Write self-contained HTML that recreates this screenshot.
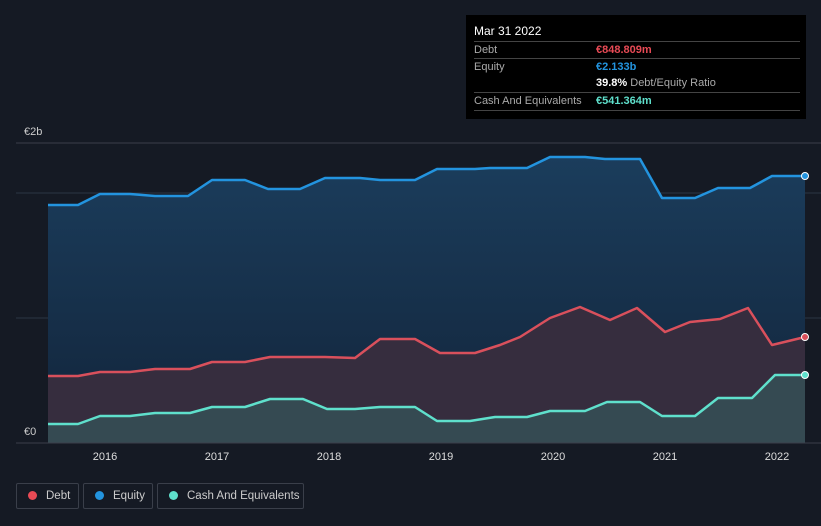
<!DOCTYPE html><html><head><style>
html,body{margin:0;width:821px;height:526px;overflow:hidden}
body{background:#151a24;font-family:"Liberation Sans",sans-serif;position:relative}
.tt{position:absolute;left:466px;top:15px;width:340px;height:104px;background:#000;color:#fff;font-size:11px}
.row{position:absolute;left:8px;width:326px;border-top:1px solid #444;height:17px;line-height:17px;color:#aaa}
.row b{position:absolute;left:122px;font-weight:bold}
.leg{position:absolute;top:483px;height:26px;border:1px solid #3a3f4a;border-radius:2px;color:#ccc;font-size:11.5px;line-height:24px;box-sizing:border-box;white-space:nowrap}
.leg i{display:inline-block;width:9px;height:9px;border-radius:50%;margin:0 9px 0 11px;vertical-align:-1px}
</style></head><body>
<svg width="821" height="526" style="position:absolute;left:0;top:0">
<defs>
<linearGradient id="ge" x1="0" y1="0" x2="0" y2="1"><stop offset="0" stop-color="#1b3d5c"/><stop offset="1" stop-color="#12243a"/></linearGradient>
</defs>
<line x1="16" y1="143" x2="821" y2="143" stroke="#3a3f4a"/>
<line x1="16" y1="193" x2="821" y2="193" stroke="#2a3545"/>
<line x1="16" y1="318" x2="821" y2="318" stroke="#2a3545"/>
<path d="M48,205 L78,205 L100,194 L130,194 L155,196 L188,196 L212,180 L245,180 L268,189 L300,189 L325,178 L360,178 L380,180 L415,180 L437,169 L475,169 L490,168 L527,168 L550,157 L585,157 L605,159 L640,159 L662,198 L695,198 L718,188 L750,188 L772,176 L805,176 L805,443 L48,443Z" fill="url(#ge)"/>
<path d="M48,376 L78,376 L100,372 L130,372 L155,369 L190,369 L212,362 L245,362 L270,357 L325,357 L355,358 L380,339 L415,339 L440,353 L475,353 L500,345 L520,337 L550,318 L580,307 L610,320 L637,308 L665,332 L690,322 L720,319 L748,308 L772,345 L805,337 L805,443 L48,443Z" fill="#362d3e"/>
<path d="M48,424 L78,424 L100,416 L130,416 L155,413 L190,413 L212,407 L245,407 L270,399 L303,399 L327,409 L355,409 L380,407 L415,407 L437,421 L470,421 L495,417 L527,417 L550,411 L585,411 L607,402 L640,402 L662,416 L695,416 L718,398 L752,398 L775,375 L805,375 L805,443 L48,443Z" fill="#354a52"/>
<path d="M48,205 L78,205 L100,194 L130,194 L155,196 L188,196 L212,180 L245,180 L268,189 L300,189 L325,178 L360,178 L380,180 L415,180 L437,169 L475,169 L490,168 L527,168 L550,157 L585,157 L605,159 L640,159 L662,198 L695,198 L718,188 L750,188 L772,176 L805,176" fill="none" stroke="#2394df" stroke-width="2.5" stroke-linejoin="round"/>
<path d="M48,376 L78,376 L100,372 L130,372 L155,369 L190,369 L212,362 L245,362 L270,357 L325,357 L355,358 L380,339 L415,339 L440,353 L475,353 L500,345 L520,337 L550,318 L580,307 L610,320 L637,308 L665,332 L690,322 L720,319 L748,308 L772,345 L805,337" fill="none" stroke="#d9505c" stroke-width="2.5" stroke-linejoin="round"/>
<path d="M48,424 L78,424 L100,416 L130,416 L155,413 L190,413 L212,407 L245,407 L270,399 L303,399 L327,409 L355,409 L380,407 L415,407 L437,421 L470,421 L495,417 L527,417 L550,411 L585,411 L607,402 L640,402 L662,416 L695,416 L718,398 L752,398 L775,375 L805,375" fill="none" stroke="#5fe0cc" stroke-width="2.5" stroke-linejoin="round"/>
<line x1="16" y1="443" x2="821" y2="443" stroke="#3a3f4a"/>
<circle cx="805" cy="176" r="3.5" fill="#2394df" stroke="#fff"/>
<circle cx="805" cy="337" r="3.5" fill="#d9505c" stroke="#fff"/>
<circle cx="805" cy="375" r="3.5" fill="#5fe0cc" stroke="#fff"/>
<g fill="#ccc" font-size="11" font-family="Liberation Sans,sans-serif">
<text x="24" y="135">€2b</text><text x="24" y="435">€0</text>
</g>
<g fill="#ddd" font-size="11" text-anchor="middle" font-family="Liberation Sans,sans-serif">
<text x="105" y="460">2016</text><text x="217" y="460">2017</text><text x="329" y="460">2018</text><text x="441" y="460">2019</text><text x="553" y="460">2020</text><text x="665" y="460">2021</text><text x="777" y="460">2022</text>
</g>
</svg>
<div class="tt">
<div style="position:absolute;left:8px;top:9px;font-size:12px">Mar 31 2022</div>
<div class="row" style="top:26px">Debt<b style="color:#e84a55">€848.809m</b></div>
<div class="row" style="top:43px">Equity<b style="color:#2394df">€2.133b</b></div>
<div class="row" style="top:60px;border-top:none"><b style="color:#fff">39.8% <span style="font-weight:normal;color:#aaa">Debt/Equity Ratio</span></b></div>
<div class="row" style="top:77px">Cash And Equivalents<b style="color:#5fe0cc">€541.364m</b></div>
<div style="position:absolute;left:8px;top:95px;width:326px;border-top:1px solid #444"></div>
</div>
<div class="leg" style="left:16px;width:63px"><i style="background:#e84a55"></i>Debt</div>
<div class="leg" style="left:83px;width:70px"><i style="background:#2394df"></i>Equity</div>
<div class="leg" style="left:157px;width:147px"><i style="background:#5fe0cc"></i>Cash And Equivalents</div>
</body></html>
